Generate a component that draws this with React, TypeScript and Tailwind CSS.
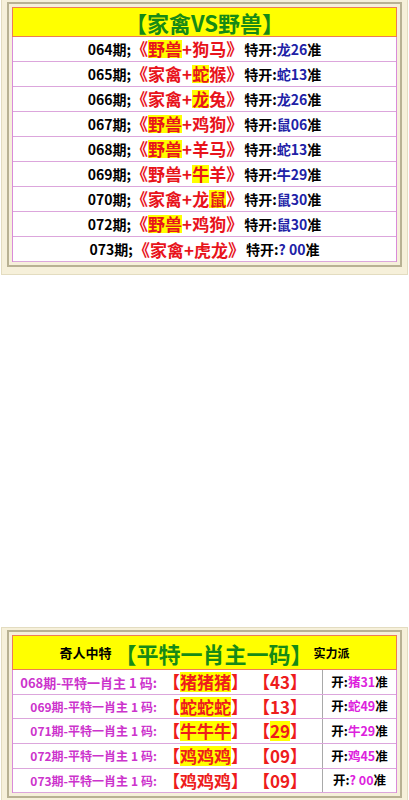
import React from "react";

type Seg = { t: string; hl?: boolean };

const topRows: { p: string; a: Seg[]; s: string }[] = [
  { p: "064", a: [{ t: "野兽", hl: true }, { t: "+狗马" }], s: "龙26" },
  { p: "065", a: [{ t: "家禽+" }, { t: "蛇", hl: true }, { t: "猴" }], s: "蛇13" },
  { p: "066", a: [{ t: "家禽+" }, { t: "龙", hl: true }, { t: "兔" }], s: "龙26" },
  { p: "067", a: [{ t: "野兽", hl: true }, { t: "+鸡狗" }], s: "鼠06" },
  { p: "068", a: [{ t: "野兽", hl: true }, { t: "+羊马" }], s: "蛇13" },
  { p: "069", a: [{ t: "野兽+" }, { t: "牛", hl: true }, { t: "羊" }], s: "牛29" },
  { p: "070", a: [{ t: "家禽+龙" }, { t: "鼠", hl: true }], s: "鼠30" },
  { p: "072", a: [{ t: "野兽", hl: true }, { t: "+鸡狗" }], s: "鼠30" },
  { p: "073", a: [{ t: "家禽+虎龙" }], s: "? 00" },
];

const botRows: {
  p: string;
  z: string;
  n: string;
  zh: boolean;
  nh: boolean;
  r: string;
  big: boolean;
  h: string;
}[] = [
  { p: "068", z: "猪猪猪", n: "43", zh: true, nh: false, r: "猪31", big: true, h: "h-[25px]" },
  { p: "069", z: "蛇蛇蛇", n: "13", zh: true, nh: false, r: "蛇49", big: false, h: "h-[24px]" },
  { p: "071", z: "牛牛牛", n: "29", zh: true, nh: true, r: "牛29", big: false, h: "h-[25px]" },
  { p: "072", z: "鸡鸡鸡", n: "09", zh: true, nh: false, r: "鸡45", big: false, h: "h-[25px]" },
  { p: "073", z: "鸡鸡鸡", n: "09", zh: false, nh: false, r: "? 00", big: false, h: "h-[24px]" },
];

function Frame({ children, top }: { children: React.ReactNode; top?: boolean }) {
  return (
    <div
      className={
        "ml-[1px] w-[407px] bg-[#f6f0da] border-x border-[#e3dcc0] px-[5px] " +
        (top ? "pt-[2px] pb-[7px] border-b" : "pt-[2px] pb-[6px] border-t")
      }
    >
      <div className="border-2 border-[#b8b193] p-[3px]">{children}</div>
    </div>
  );
}

export default function App() {
  return (
    <div className="w-[409px] bg-white font-['Noto_Sans_CJK_SC',sans-serif] font-bold">
      <Frame top>
        <div className="flex flex-col">
          <div className="h-[30px] bg-[#ffff00] border border-[#ec7c58] flex items-center justify-center text-[22px] leading-none text-[#168a16]">
            【家禽VS野兽】
          </div>
          <div className="border-x border-[#d98bd9]">
            {topRows.map((r) => (
              <div
                key={r.p}
                className="h-[25px] bg-white border-b border-[#dca6dc] flex items-center justify-center leading-none whitespace-nowrap"
              >
                <span className="text-[14px] text-black">{r.p}期;</span>
                <span className="text-[17px] leading-[17px] text-[#e8141c]">
                  《
                  {r.a.map((s, i) =>
                    s.hl ? (
                      <span key={i} className="inline-block bg-[#ffff00] h-[18px] leading-[18px]">
                        {s.t}
                      </span>
                    ) : (
                      <span key={i}>{s.t}</span>
                    )
                  )}
                  》
                </span>
                <span className="ml-[1px] text-[14px] text-black">
                  特开:<span className="text-[#2121a6]">{r.s}</span>准
                </span>
              </div>
            ))}
          </div>
        </div>
      </Frame>
      <div className="h-[352px]" />
      <Frame>
        <div className="flex flex-col">
          <div className="h-[35px] bg-[#ffff00] border border-[#ec7c58] flex items-center justify-center leading-none text-black whitespace-nowrap">
            <span className="text-[13px]">奇人中特</span>
            <span className="ml-[3px] text-[22px] text-[#168a16]">【平特一肖主一码】</span>
            <span className="ml-[1px] text-[12px]">实力派</span>
          </div>
          <div className="border-x border-[#d98bd9]">
            {botRows.map((r) => (
              <div key={r.p} className={"flex bg-white border-b border-[#dca6dc] " + r.h}>
                <div className="w-[310px] shrink-0 border-r border-[#a9a9a9] flex items-center leading-none whitespace-nowrap">
                  <div className="w-[150px] shrink-0 flex justify-end pr-[6px]">
                    <span className={(r.big ? "text-[13px]" : "text-[12px]") + " text-[#cc33cc]"}>
                      {r.p}期-平特一肖主
                      <span className={r.big ? "mx-[3px]" : "mx-[3px]"}>1</span>码:
                    </span>
                  </div>
                  <span className="shrink-0 text-[17px] leading-[17px] text-[#ee1c1c]">
                    【
                    <span
                      className={
                        r.zh ? "inline-block bg-[#ffff00] h-[20px] leading-[20px]" : "inline-block"
                      }
                    >
                      {r.z}
                    </span>
                    】<span className="inline-block w-[5px]" />【
                    <span className={r.nh ? "inline-block bg-[#ffff00] h-[20px] leading-[20px]" : "inline-block"}>
                      {r.n}
                    </span>
                    】
                  </span>
                </div>
                <div className="flex-1 flex items-center justify-center text-[12.5px] leading-none text-black whitespace-nowrap">
                  开:<span className="text-[#dd22dd]">{r.r}</span>准
                </div>
              </div>
            ))}
          </div>
        </div>
      </Frame>
    </div>
  );
}
